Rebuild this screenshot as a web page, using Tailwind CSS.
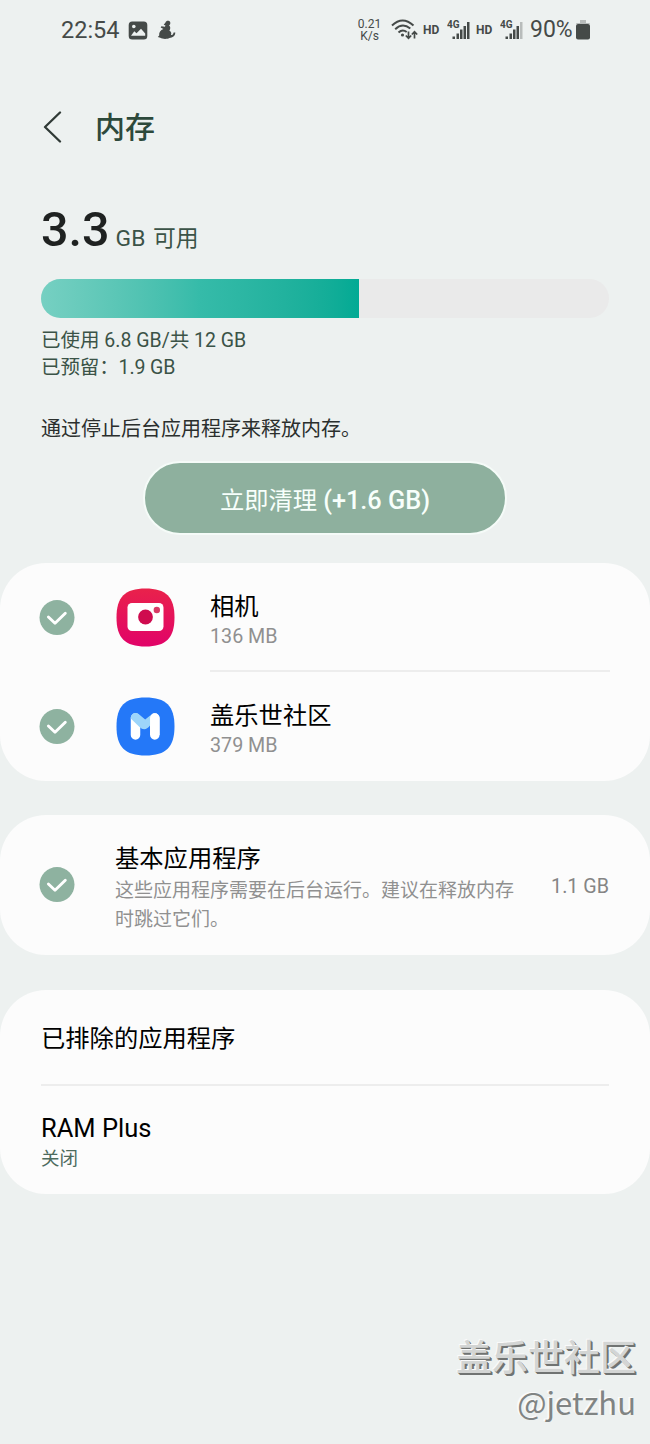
<!DOCTYPE html>
<html lang="zh-CN">
<head>
<meta charset="utf-8">
<title>内存</title>
<script src="https://cdn.jsdelivr.net/npm/@tailwindcss/browser@4"></script>
</head>
<body class="bg-[#edf1f0]">
<svg class="hidden">
  <symbol id="check" viewBox="0 0 36 36"><circle cx="18" cy="17.600" r="17.500" fill="#8eb2a0"/><path d="M9.400 17 16 23.300 26.300 13.200" fill="none" stroke="#fff" stroke-width="2.900" stroke-linecap="round" stroke-linejoin="round"/></symbol>
</svg>
<div class="flex h-[1444px] w-[650px] flex-col overflow-hidden whitespace-nowrap bg-[#edf1f0] font-['Roboto','Noto_Sans_CJK_SC',sans-serif] text-black">
  <header class="flex h-[60px] items-center pl-[61px] text-[#454a48]">
    <span class="w-[67px] text-[23.500px] leading-[58px]">22:54</span>
    <svg class="h-[19px] w-[20px]" viewBox="0 0 20 19"><rect x=".7" y=".5" width="18.600" height="18" rx="3.500" fill="#454a48"/><circle cx="5.800" cy="5.500" r="1.800" fill="#edf1f0"/><path d="M3 14.800 6.300 10.200 8.500 12.300 13 7.700 17.200 12.500V14.800Z" fill="#edf1f0"/></svg>
    <svg class="ml-[9px] h-[20px] w-[20px]" viewBox="0 0 20 20" fill="#454a48"><path d="M8.500 2.400C9 .5 12 0 13 1.800c.8 1.500.1 3-.9 3.700 1.500 1 1.500 3.200.3 5.200 2 .8 2.300 2.800 1.500 4.400 1.600-.1 2.500-1 2.700-2.700l1.700.1c-.1 3.700-2.700 5.200-5.900 5.500-2.300 1.300-7 1.200-9.100-.2L.8 17l1.400-1.400C1.800 12.400 3.500 10 6.400 9L3.700 7.500l.7-1.300 3.500.5.6-1.300-1.800-.6Z"/></svg>
    <div class="ml-[179px] w-[27px] text-center text-[12px] leading-[12px]"><div class="h-[12px]">0.21</div><div class="h-[12px]">K/s</div></div>
    <svg class="ml-[8px] h-[22px] w-[27px]" viewBox="0 0 27 22" fill="none" stroke="#454a48" stroke-width="2"><path d="M1 6.500Q11.500-3.500 22.500 6.500M4.200 10.200Q11.500 3.200 19.300 9.500M7.500 13.500Q11.500 9.700 15.700 13"/><circle cx="11.500" cy="16" r="1.600" fill="#454a48" stroke="none"/><path stroke-width="1.700" d="M17.500 12.500V19M14.800 16.500 17.500 19.300 20.200 16.500M23.500 19.500V13M20.800 15.500 23.500 12.700 26.200 15.500"/></svg>
    <span class="ml-[5px] w-[17px] text-[12px] font-bold leading-[15px]">HD</span>
    <svg class="ml-[7px] h-[24px] w-[26px]" viewBox="0 0 26 24" fill="#454a48"><text x="0" y="9.500" font-size="10" font-weight="700">4G</text><path d="M5.500 18.500h2.500v2.500h-2.500zM9.500 15.500h2.500v5.500h-2.500zM13 11.500h2.500v9.500h-2.500zM16.500 8h2.500v13h-2.500zM20 4h2.500v17H20z"/></svg>
    <span class="ml-[3px] w-[17px] text-[12px] font-bold leading-[15px]">HD</span>
    <svg class="ml-[7px] h-[24px] w-[26px]" viewBox="0 0 26 24" fill="#454a48"><text x="0" y="9.500" font-size="10" font-weight="700">4G</text><path d="M5.500 18.500h2.500v2.500h-2.500zM9.500 15.500h2.500v5.500h-2.500zM13 11.500h2.500v9.500h-2.500zM16.500 8h2.500v13h-2.500z"/><path fill="#b8bcbb" d="M20 4h2.500v17H20z"/></svg>
    <span class="ml-[4px] w-[46px] text-[23px] leading-[60px]">90%</span>
    <svg class="h-[20px] w-[14px]" viewBox="0 0 14 20"><path d="M4 0h6v3h3q1 0 1 1H0q0-1 1-1h3z" fill="#b8bcbb"/><rect y="4" width="14" height="15.500" rx="2" fill="#454a48"/></svg>
  </header>

  <div class="flex h-[134px] items-center pl-[43px] text-[#2d493b]">
    <svg class="h-[32px] w-[19px]" viewBox="0 0 19 32"><path d="M17 1.500 2 16 17 30.500" fill="none" stroke="#303a36" stroke-width="2.300" stroke-linecap="round" stroke-linejoin="round"/></svg>
    <h1 class="ml-[33px] pt-[2px] text-[30px] font-medium leading-[40px]">内存</h1>
  </div>

  <section class="px-[41px]">
    <div class="flex h-[85px] items-baseline pt-[6px]">
      <span class="text-[48.500px] font-medium leading-[60px] text-[#1f2221]">3.3</span>
      <span class="ml-[6px] text-[22.800px] text-[#3b5347] [word-spacing:2px]">GB 可用</span>
    </div>
    <div class="h-[39px] w-[568px] overflow-hidden rounded-full bg-[#eaeaea]">
      <div class="h-full w-[318px] bg-linear-to-r from-[#76d0c2] via-[#35bba9] to-[#02aa94]"></div>
    </div>
    <div class="pt-[10px] text-[19.500px] leading-[26.500px] text-[#3b5347]">
      <p>已使用 6.8 GB/共 12 GB</p>
      <p class="tracking-[-0.1px]">已预留：1.9 GB</p>
    </div>
    <p class="mt-[33px] text-[20px] leading-[30px] text-[#2b2f2d]">通过停止后台应用程序来释放内存。</p>
  </section>

  <button class="mt-[17px] h-[74px] w-[364px] shrink-0 self-center rounded-full border-2 border-[#f5fbf8] bg-[#8eb09e] pt-[5px] text-[24.300px] text-[#f7fffb]">立即清理 <span class="text-[25.300px] font-medium">(+1.6 GB)</span></button>

  <section class="mt-[28px] h-[218px] shrink-0 rounded-[46px] bg-[#fcfcfc]">
    <div class="flex h-[109px] items-center pl-[39px]">
      <svg class="size-[36px]"><use href="#check"/></svg>
      <svg class="ml-[41px] size-[59px]" viewBox="0 0 59 59"><defs><linearGradient id="cam" x2="0" y2="1"><stop stop-color="#e9224b"/><stop offset="1" stop-color="#e10369"/></linearGradient></defs><path d="M29.500.5C50 .5 58.500 9 58.500 29.500S50 58.500 29.500 58.500.5 50 .5 29.500 9 .5 29.500.5Z" fill="url(#cam)"/><rect x="11.500" y="15" width="36" height="28" rx="4.500" fill="#fff"/><circle cx="29.500" cy="29" r="7.400" fill="#cf0b4f"/><circle cx="40.800" cy="22" r="3.200" fill="#d83a65"/></svg>
      <div class="ml-[35px] h-full grow pt-[28px]">
        <h2 class="text-[24.300px] leading-[32px]">相机</h2>
        <p class="text-[19.700px] leading-[27px] text-[#909090]">136 MB</p>
        <div class="mr-[40px] mt-[20px] h-[2px] bg-[#ededed]"></div>
      </div>
    </div>
    <div class="flex h-[109px] items-center pl-[39px]">
      <svg class="size-[36px]"><use href="#check"/></svg>
      <svg class="ml-[41px] size-[59px]" viewBox="0 0 59 59"><path d="M29.500.5C50 .5 58.500 9 58.500 29.500S50 58.500 29.500 58.500.5 50 .5 29.500 9 .5 29.500.5Z" fill="#2478f8"/><path d="M19.500 21V38M38.800 21V38" stroke="#fff" stroke-width="9.500" stroke-linecap="round"/><path d="M14.750 21.500C14.500 16 20.500 14.500 23.500 17.700L29.200 22.500 34.800 18V27.500Q29.200 35.500 23.500 30Z" fill="#9dd5fa"/><path d="M34.050 38V21a4.750 4.750 0 0 1 9.500 0V38Z" fill="#fff"/></svg>
      <div class="ml-[35px] h-full pt-[28px]">
        <h2 class="text-[24.300px] leading-[32px]">盖乐世社区</h2>
        <p class="text-[19.700px] leading-[27px] text-[#909090]">379 MB</p>
      </div>
    </div>
  </section>

  <section class="mt-[34px] flex h-[140px] shrink-0 items-center rounded-[46px] bg-[#fcfcfc] pl-[39px] pr-[41px]">
    <svg class="size-[36px]"><use href="#check"/></svg>
    <div class="ml-[40px] h-full grow pt-[28px]">
      <h2 class="text-[24.300px] leading-[32px]">基本应用程序</h2>
      <p class="pt-px text-[19px] leading-[29px] text-[#909090]">这些应用程序需要在后台运行。建议在释放内存<br>时跳过它们。</p>
    </div>
    <span class="pt-[4px] text-[19.700px] text-[#858585]">1.1 GB</span>
  </section>

  <section class="mt-[35px] h-[204px] shrink-0 rounded-[46px] bg-[#fcfcfc] px-[41px] pt-[33px]">
    <h2 class="text-[24.300px] leading-[32px]">已排除的应用程序</h2>
    <div class="mt-[29px] h-[2px] bg-[#ededed]"></div>
    <h2 class="mt-[26px] text-[25.500px] leading-[32px]">RAM Plus</h2>
    <p class="pt-px text-[18.500px] leading-[29px] text-[#4d6b5e]">关闭</p>
  </section>

  <footer class="mt-auto h-[115px] pr-[14px] text-right font-['Noto_Sans_CJK_SC',sans-serif]">
    <p class="text-[36px] font-medium leading-[52px] text-[#d3d5d4] [text-shadow:-1px_-1px_0_#fafafa,1px_1px_0_#707372,2px_2px_0_#707372]">盖乐世社区</p>
    <p class="text-[31px] leading-[42px] text-[#808483] [text-shadow:-1px_-1px_0_#fafafa,-2px_-1px_0_#fafafa]">@jetzhu</p>
  </footer>
</div>
</body>
</html>
